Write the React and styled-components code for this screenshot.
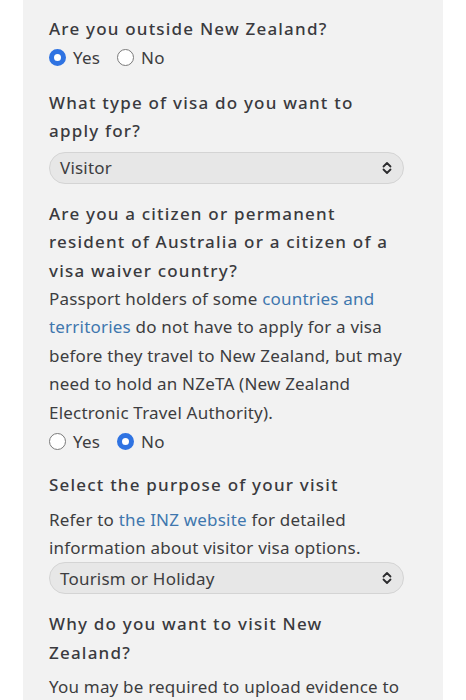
import React, { useState } from "react";
import styled, { createGlobalStyle } from "styled-components";

const GlobalStyle = createGlobalStyle`
  html, body {
    margin: 0;
    padding: 0;
    background: #ffffff;
  }
  body {
    font-family: "Noto Sans", "Open Sans", sans-serif;
    -webkit-font-smoothing: antialiased;
  }
`;

const Page = styled.div`
  width: 466px;
  height: 700px;
  overflow: hidden;
  background: #ffffff;
`;

const Panel = styled.div`
  margin-left: 23px;
  width: 420px;
  min-height: 700px;
  background: #f2f2f2;
  padding: 15px 39px 0 26px;
  box-sizing: border-box;
`;

const Question = styled.section`
  display: flex;
  flex-direction: column;
  margin-bottom: ${(p) => p.$gap || 18}px;
`;

const Heading = styled.h2`
  margin: 0;
  font-size: 17px;
  line-height: 28.5px;
  font-weight: 500;
  letter-spacing: 1.2px;
  color: #3a3a3e;
`;

const Help = styled.p`
  margin: ${(p) => p.$top || 0}px 0 0;
  font-size: 17px;
  line-height: 28.4px;
  font-weight: 400;
  letter-spacing: 0.2px;
  color: #3d3d40;
`;

const Link = styled.a`
  color: #3f77ae;
  text-decoration: none;
`;

const RadioRow = styled.div`
  display: flex;
  align-items: center;
  gap: 17px;
  height: 28px;
`;

const RadioLabel = styled.label`
  display: flex;
  align-items: center;
  gap: 7px;
  font-size: 17px;
  letter-spacing: 0.2px;
  color: #3d3d40;
  cursor: pointer;
`;

const Dot = styled.span`
  width: 17px;
  height: 17px;
  border-radius: 50%;
  box-sizing: border-box;
  background: #ffffff;
  border: ${(p) => (p.$on ? "5px solid #2f73e2" : "1.5px solid #7a7a7a")};
`;

const SelectBox = styled.div`
  display: flex;
  align-items: center;
  justify-content: space-between;
  width: 355px;
  height: 32px;
  margin-top: ${(p) => p.$top || 0}px;
  padding: 0 10px;
  box-sizing: border-box;
  border-radius: 16px;
  background: #e7e7e7;
  border: 1px solid #d4d4d4;
  font-size: 17px;
  letter-spacing: 0.2px;
  color: #3d3d40;
`;

const Chevrons = () => (
  <svg width="12" height="14" viewBox="0 0 12 14" fill="none">
    <path d="M2.5 5.5 6 2l3.5 3.5M2.5 8.5 6 12l3.5-3.5" stroke="#2c2c2e" strokeWidth="1.8" strokeLinecap="round" strokeLinejoin="round" />
  </svg>
);

const Radios = ({ value, onChange }) => (
  <RadioRow>
    {["Yes", "No"].map((opt) => (
      <RadioLabel key={opt} onClick={() => onChange(opt)}>
        <Dot $on={value === opt} />
        {opt}
      </RadioLabel>
    ))}
  </RadioRow>
);

export default function App() {
  const [outside, setOutside] = useState("Yes");
  const [waiver, setWaiver] = useState("No");

  return (
    <Page>
      <GlobalStyle />
      <Panel>
        <Question $gap={17}>
          <Heading>Are you outside New Zealand?</Heading>
          <Radios value={outside} onChange={setOutside} />
        </Question>

        <Question $gap={16}>
          <Heading>What type of visa do you want to apply for?</Heading>
          <SelectBox $top={6}>
            <span>Visitor</span>
            <Chevrons />
          </SelectBox>
        </Question>

        <Question $gap={16}>
          <Heading>
            Are you a citizen or permanent resident of Australia or a citizen of a visa waiver country?
          </Heading>
          <Help>
            Passport holders of some <Link href="#">countries and territories</Link> do not have to
            apply for a visa before they travel to New Zealand, but may need to hold an NZeTA (New
            Zealand Electronic Travel Authority).
          </Help>
          <Radios value={waiver} onChange={setWaiver} />
        </Question>

        <Question $gap={16}>
          <Heading>Select the purpose of your visit</Heading>
          <Help $top={6}>
            Refer to <Link href="#">the INZ website</Link> for detailed information about visitor visa
            options.
          </Help>
          <SelectBox $top={0}>
            <span>Tourism or Holiday</span>
            <Chevrons />
          </SelectBox>
        </Question>

        <Question>
          <Heading>Why do you want to visit New Zealand?</Heading>
          <Help $top={6}>You may be required to upload evidence to support your application.</Help>
        </Question>
      </Panel>
    </Page>
  );
}
